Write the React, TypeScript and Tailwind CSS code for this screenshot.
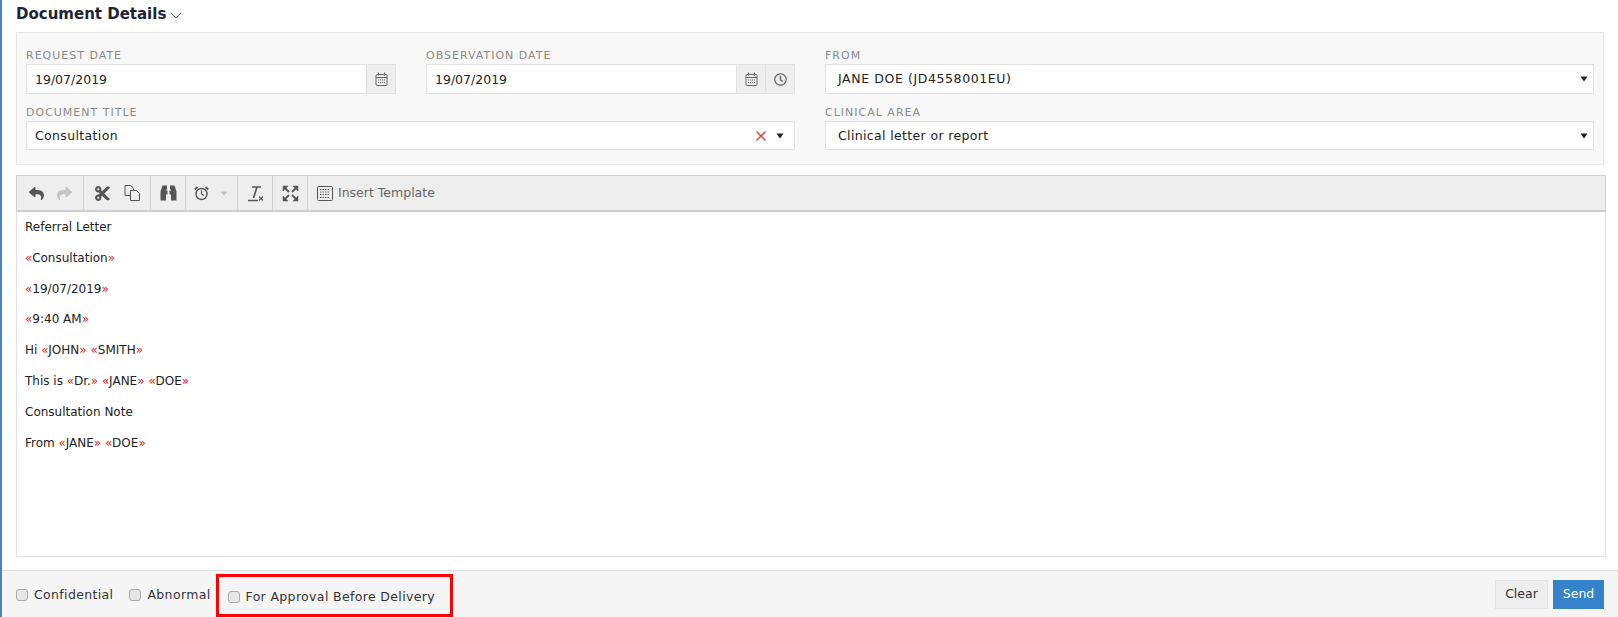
import React from "react";
import { FaReply, FaShare, FaCut, FaCaretDown, FaRegClock } from "react-icons/fa";

const font = "font-['DejaVu_Sans',sans-serif]";

function Label({ children }: { children: React.ReactNode }) {
  return <div className="h-[18px] pt-[2px] text-[11px] leading-[16px] tracking-[1px] text-[#8a8a8a] uppercase">{children}</div>;
}

function Addon({ children }: { children: React.ReactNode }) {
  return <div className="flex w-[29px] items-center justify-center border-l border-[#e1e1e1] bg-[#eeeeee] text-[#666]">{children}</div>;
}

function Calendar() {
  return (
    <svg width="13" height="14" viewBox="0 0 13 14" fill="none" stroke="#666" strokeWidth="1">
      <rect x="1" y="2.5" width="11" height="11" rx="1" />
      <path d="M1 5.5h11M3.5 0.5v3M9.5 0.5v3" />
      <path d="M3 8h7M3 10.5h7" strokeDasharray="1.2 0.8" strokeWidth="1.2" />
    </svg>
  );
}

function Field({ value, children }: { value: string; children?: React.ReactNode }) {
  return (
    <div className="flex h-[30px] border border-[#e1e1e1] bg-white">
      <div className="flex-1 pl-[8px] text-[12.5px] leading-[29px] text-[#222]">{value}</div>
      {children}
    </div>
  );
}

function SmallCaret() {
  return (
    <svg width="8" height="6" viewBox="0 0 8 6" fill="#222">
      <path d="M0.5 0.5h7L4 5.5z" />
    </svg>
  );
}

function Select({ value, h, track }: { value: string; h: string; track: string }) {
  return (
    <div className={`flex ${h} items-center border border-[#e1e1e1] bg-white pl-[12px] pr-[5px]`}>
      <div className={`flex-1 pt-[1px] text-[12.5px] text-[#222] ${track}`}>{value}</div>
      <SmallCaret />
    </div>
  );
}

function Group({ children, w }: { children: React.ReactNode; w: string }) {
  return <div className={`flex ${w} items-center justify-center gap-[13px] border-r border-[#d2d2d2] text-[#555]`}>{children}</div>;
}

function Tok({ children }: { children: string }) {
  return (
    <span>
      <span className="text-[#e02020]">«</span>
      {children}
      <span className="text-[#e02020]">»</span>
    </span>
  );
}

function Check({ label }: { label: string }) {
  return (
    <label className="flex items-center gap-[6px] pt-[3px] text-[12.5px] tracking-[0.35px] text-[#333]">
      <input type="checkbox" className="-mt-[1px] h-[12px] w-[12px] appearance-none rounded-[3px] border border-[#aaaaaa] bg-[#e6e6e6]" />
      {label}
    </label>
  );
}

export default function App() {
  return (
    <div className={`${font} flex h-[617px] w-[1618px] flex-col overflow-hidden border-l-2 border-[#4a86b8] bg-white`}>
      <div className="flex h-[32px] items-start pl-[14px] pt-[4px]">
        <span className="text-[15px] leading-[20px] font-bold text-[#1d2433]">Document Details</span>
        <svg width="12" height="7" viewBox="0 0 12 7" className="ml-[4px] mt-[8px]" fill="none" stroke="#666" strokeWidth="1">
          <path d="M1 1l5 5 5-5" />
        </svg>
      </div>

      <div className="ml-[14px] grid h-[133px] w-[1588px] grid-cols-[370px_369px_769px] content-start gap-x-[30px] border border-[#e6e6e6] bg-[#f8f8f8] px-[9px] pt-[13px]">
        <div>
          <Label>Request Date</Label>
          <Field value="19/07/2019">
            <Addon><Calendar /></Addon>
          </Field>
        </div>
        <div>
          <Label>Observation Date</Label>
          <Field value="19/07/2019">
            <Addon><Calendar /></Addon>
            <Addon><FaRegClock className="text-[13px]" /></Addon>
          </Field>
        </div>
        <div>
          <Label>From</Label>
          <Select value="JANE DOE (JD4558001EU)" h="h-[30px]" track="tracking-[0.6px]" />
        </div>
        <div className="col-span-2 mt-[9px]">
          <Label>Document Title</Label>
          <div className="flex h-[29px] items-center border border-[#e1e1e1] bg-white pl-[8px] pr-[10px]">
            <div className="flex-1 pt-[1px] text-[12.5px] tracking-[0.35px] text-[#222]">Consultation</div>
            <svg width="12" height="12" viewBox="0 0 12 12" fill="none" stroke="#e53935" strokeWidth="1.3" className="mr-[9px]">
              <path d="M1.5 1.5l9 9M10.5 1.5l-9 9" />
            </svg>
            <SmallCaret />
          </div>
        </div>
        <div className="mt-[9px]">
          <Label>Clinical Area</Label>
          <Select value="Clinical letter or report" h="h-[29px]" track="tracking-[0.35px]" />
        </div>
      </div>

      <div className="ml-[14px] mt-[10px] flex h-[37px] w-[1590px] border border-b-2 border-[#cfcfcf] bg-[#eeeeee]">
        <Group w="w-[67px]">
          <FaReply className="text-[15px]" />
          <FaShare className="text-[15px] text-[#c4c4c4]" />
        </Group>
        <Group w="w-[67px]">
          <FaCut className="text-[17px]" />
          <svg width="16" height="16" viewBox="0 0 16 16" fill="none" stroke="#555" strokeWidth="1">
            <path d="M1 0.5h6l2.5 3v2M1 0.5v10h5" />
            <path d="M6.5 5.5h6l3 3v7h-9z" fill="#eee" />
          </svg>
        </Group>
        <Group w="w-[35px]">
          <svg width="17" height="16" viewBox="0 0 17 16" fill="#555">
            <path d="M2.5 0.5h4.5v4h-1v1h1.5v4h-1.5V15.5H0.5v-9z" />
            <path d="M14.5 0.5H10v4h1v1H9.5v4H11V15.5h5.5v-9z" />
          </svg>
        </Group>
        <Group w="w-[52px]">
          <div className="flex items-center gap-[10px]">
            <svg width="15" height="15" viewBox="0 0 15 15" fill="none" stroke="#555">
              <circle cx="7.5" cy="8" r="5.5" strokeWidth="1.4" />
              <path d="M7.5 4.5V8l2.5 1.5" strokeWidth="1.2" />
              <path d="M0.8 3.5L3.5 1M14.2 3.5L11.5 1" strokeWidth="1.8" />
            </svg>
            <FaCaretDown className="text-[10px] text-[#bbb]" />
          </div>
        </Group>
        <Group w="w-[35px]">
          <svg width="17" height="17" viewBox="0 0 17 17" fill="none" stroke="#555">
            <path d="M5 2h9M10 2L6.5 13" strokeWidth="1.7" />
            <path d="M1 15.5h10" strokeWidth="1.5" />
            <path d="M12 11.5l4 4M16 11.5l-4 4" strokeWidth="1.1" />
          </svg>
        </Group>
        <Group w="w-[35px]">
          <svg width="17" height="17" viewBox="0 0 17 17" fill="#555" stroke="#555">
            <path d="M1 1h5L1 6zM16 1h-5l5 5zM1 16h5l-5-5zM16 16h-5l5-5z" strokeWidth="0.5" />
            <path d="M3 3l4 4M14 3l-4 4M3 14l4-4M14 14l-4-4" strokeWidth="1.8" />
          </svg>
        </Group>
        <div className="flex items-center gap-[5px] pl-[9px] text-[12.5px] text-[#666]">
          <svg width="16" height="15" viewBox="0 0 16 15" fill="none" stroke="#555" strokeWidth="1">
            <rect x="0.5" y="0.5" width="15" height="14" rx="1" />
            <path d="M3 3.5h10M3 6h10M3 8.5h10M3 11.5h10" strokeDasharray="1.5 1" />
          </svg>
          Insert Template
        </div>
      </div>

      <div className="ml-[14px] h-[345px] w-[1590px] border border-t-0 border-[#e1e1e1] px-[8px] pt-[7px] text-[12px] leading-[16.8px] text-[#222]">
        <p className="mb-[14px]">Referral Letter</p>
        <p className="mb-[14px]"><Tok>Consultation</Tok></p>
        <p className="mb-[14px]"><Tok>19/07/2019</Tok></p>
        <p className="mb-[14px]"><Tok>9:40 AM</Tok></p>
        <p className="mb-[14px]">Hi <Tok>JOHN</Tok> <Tok>SMITH</Tok></p>
        <p className="mb-[14px]">This is <Tok>Dr.</Tok> <Tok>JANE</Tok> <Tok>DOE</Tok></p>
        <p className="mb-[14px]">Consultation Note</p>
        <p>From <Tok>JANE</Tok> <Tok>DOE</Tok></p>
      </div>

      <div className="mt-[13px] flex h-[47px] items-center border-t border-[#dddddd] bg-[#f5f5f5] pl-[14px] pr-[14px]">
        <Check label="Confidential" />
        <div className="w-[16px]" />
        <Check label="Abnormal" />
        <div className="ml-[5px] flex h-[43px] w-[237px] items-center self-end border-[3px] border-[#ff0000] pl-[9px]">
          <Check label="For Approval Before Delivery" />
        </div>
        <div className="flex-1" />
        <button className="h-[29px] w-[53px] border border-[#e4e4e4] bg-[#eeeeee] text-[12.5px] text-[#333]">Clear</button>
        <button className="ml-[5px] h-[29px] w-[51px] bg-[#3583ca] text-[12.5px] text-white">Send</button>
      </div>
    </div>
  );
}
